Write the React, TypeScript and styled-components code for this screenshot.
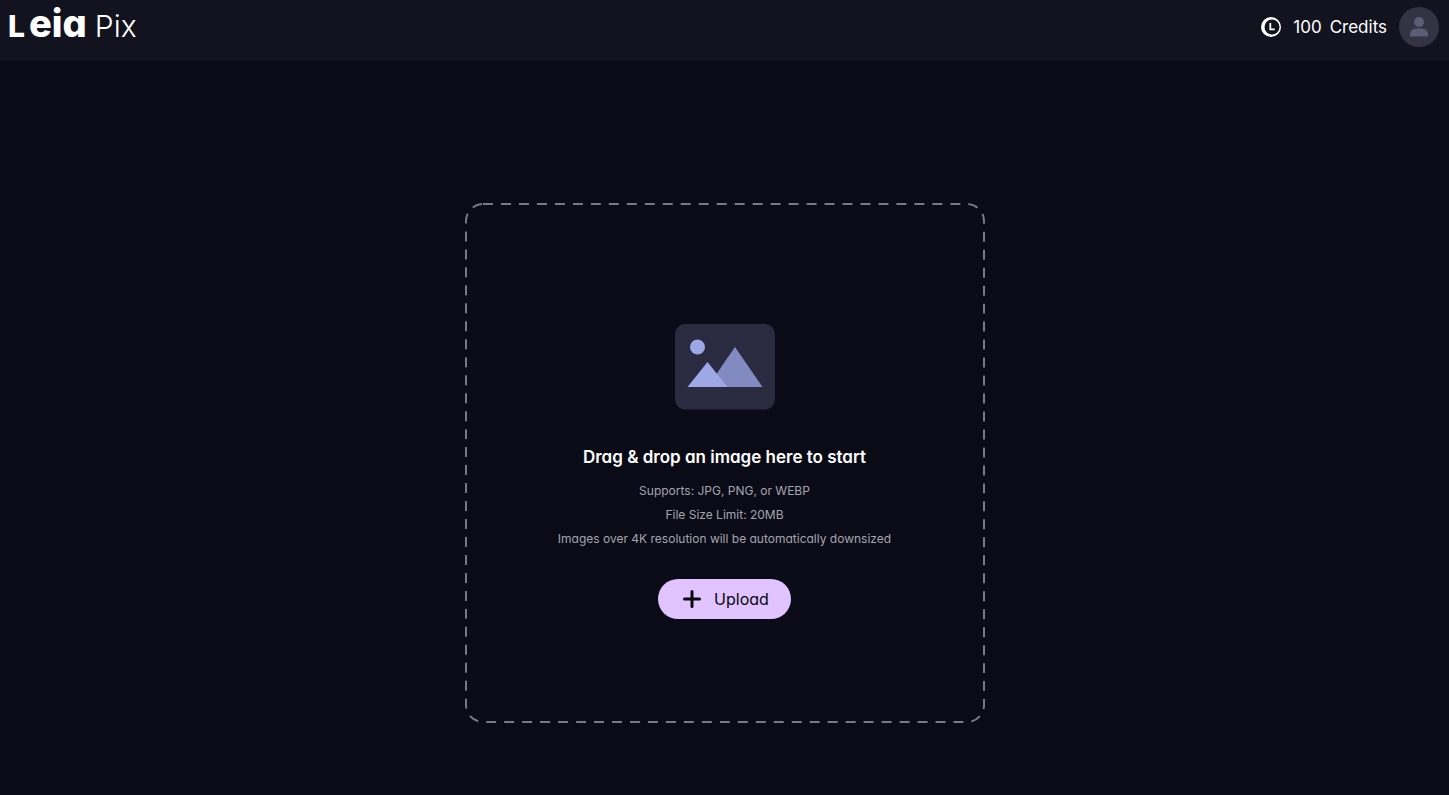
import React, { useId } from "react";
import styled, { createGlobalStyle } from "styled-components";

const GlobalStyle = createGlobalStyle`
  *, *::before, *::after { box-sizing: border-box; }
  body {
    margin: 0;
    background: #0b0b17;
    color: #ffffff;
    font-family: Inter, "Open Sans", sans-serif;
    font-feature-settings: "cv11" 1;
  }
`;

const Page = styled.div`
  min-height: 100vh;
  display: flex;
  flex-direction: column;
`;

const Header = styled.header`
  display: flex;
  justify-content: space-between;
  align-items: flex-start;
  height: 61px;
  padding: 7px 10px 0 8px;
  background: #13121f;
`;

const Logo = styled.a`
  display: flex;
  align-items: baseline;
  gap: 4px;
  color: #ffffff;
  text-decoration: none;
  line-height: 32px;
`;

const LogoPart = styled.span<{ $size: number; $weight: number }>`
  font-size: ${(p) => p.$size}px;
  font-weight: ${(p) => p.$weight};
`;

const LogoSuffix = styled(LogoPart)`
  margin-left: 4px;
`;

const Account = styled.div`
  display: flex;
  align-items: center;
`;

const Credits = styled.div`
  display: flex;
  align-items: center;
  gap: 8px;
  margin: 0 12px;
  font-size: 17px;
  line-height: 24px;
`;

const AvatarButton = styled.button`
  display: flex;
  width: 40px;
  height: 40px;
  padding: 0;
  border: 0;
  border-radius: 50%;
  background: #343343;
  cursor: pointer;
`;

const Main = styled.main`
  flex: 1;
  display: flex;
  justify-content: center;
  align-items: center;
  padding: 70px 16px 0;
`;

const DropZone = styled.section`
  position: relative;
  display: flex;
  flex-direction: column;
  align-items: center;
  justify-content: center;
  width: 100%;
  max-width: 520px;
  aspect-ratio: 1;
  padding: 33px 16px 16px;
  text-align: center;
`;

const Outline = styled.svg`
  position: absolute;
  inset: 0;
  width: 100%;
  height: 100%;
  pointer-events: none;
`;

const Title = styled.h1`
  margin: 35px 0 10px;
  font-size: 17px;
  font-weight: 600;
  line-height: 24px;
`;

const Hint = styled.p`
  margin: 0;
  color: #a5a5ad;
  font-size: 12px;
  line-height: 24px;
`;

const UploadButton = styled.button`
  display: flex;
  align-items: center;
  gap: 12px;
  height: 40px;
  margin-top: 28px;
  padding: 0 22px 0 24px;
  border: 0;
  border-radius: 20px;
  background: #e0c3ff;
  color: #08080f;
  font: inherit;
  font-size: 16px;
  cursor: pointer;
`;

const CoinIcon = () => (
  <svg width="20" height="20" viewBox="0 0 20 20" aria-hidden="true">
    <circle cx="10" cy="10" r="10" fill="#ffffff" />
    <circle cx="11" cy="10" r="7.5" fill="#13121f" />
    <path d="M9.3 6V12.4H13.8" fill="none" stroke="#ffffff" strokeWidth="1.8" />
  </svg>
);

const PersonIcon = () => (
  <svg width="40" height="40" viewBox="0 0 40 40" aria-hidden="true" fill="#5a5d76">
    <circle cx="20" cy="15" r="5" />
    <path d="M11 29.5v-2a6 6 0 0 1 6-6h6a6 6 0 0 1 6 6v2z" />
  </svg>
);

const PictureIcon = () => (
  <svg width="100" height="86" viewBox="0 0 100 86" aria-hidden="true">
    <rect width="100" height="85.5" rx="10" fill="#2a2b40" />
    <circle cx="22.5" cy="23" r="7.5" fill="#9fa8e6" />
    <path d="M60 23L87.5 63H50L41 50.5z" fill="#828bc1" />
    <path d="M32.5 38L52.5 63H12.5z" fill="#9fa8e6" />
  </svg>
);

const PlusIcon = () => (
  <svg width="20" height="20" viewBox="0 0 20 20" aria-hidden="true">
    <path d="M10 2.5V17.5M2.5 10H17.5" stroke="#08080f" strokeWidth="3" strokeLinecap="round" />
  </svg>
);

export default function App() {
  const titleId = useId();
  return (
    <Page>
      <GlobalStyle />
      <Header>
        <Logo href="#" aria-label="Leia Pix">
          <LogoPart $size={30} $weight={800}>L</LogoPart>
          <LogoPart $size={38} $weight={800}>eia</LogoPart>
          <LogoSuffix $size={30} $weight={300}>Pix</LogoSuffix>
        </Logo>
        <Account>
          <CoinIcon />
          <Credits>
            <span>100</span>
            <span>Credits</span>
          </Credits>
          <AvatarButton type="button" aria-label="Account">
            <PersonIcon />
          </AvatarButton>
        </Account>
      </Header>
      <Main>
        <DropZone aria-labelledby={titleId}>
          <Outline viewBox="0 0 520 520" aria-hidden="true">
            <rect
              x="1"
              y="1"
              width="518"
              height="518"
              rx="17"
              pathLength="2045"
              fill="none"
              stroke="#797883"
              strokeWidth="2"
              strokeDasharray="10 8"
            />
          </Outline>
          <PictureIcon />
          <Title id={titleId}>Drag &amp; drop an image here to start</Title>
          <Hint>Supports: JPG, PNG, or WEBP</Hint>
          <Hint>File Size Limit: 20MB</Hint>
          <Hint>Images over 4K resolution will be automatically downsized</Hint>
          <UploadButton type="button">
            <PlusIcon />
            Upload
          </UploadButton>
        </DropZone>
      </Main>
    </Page>
  );
}
